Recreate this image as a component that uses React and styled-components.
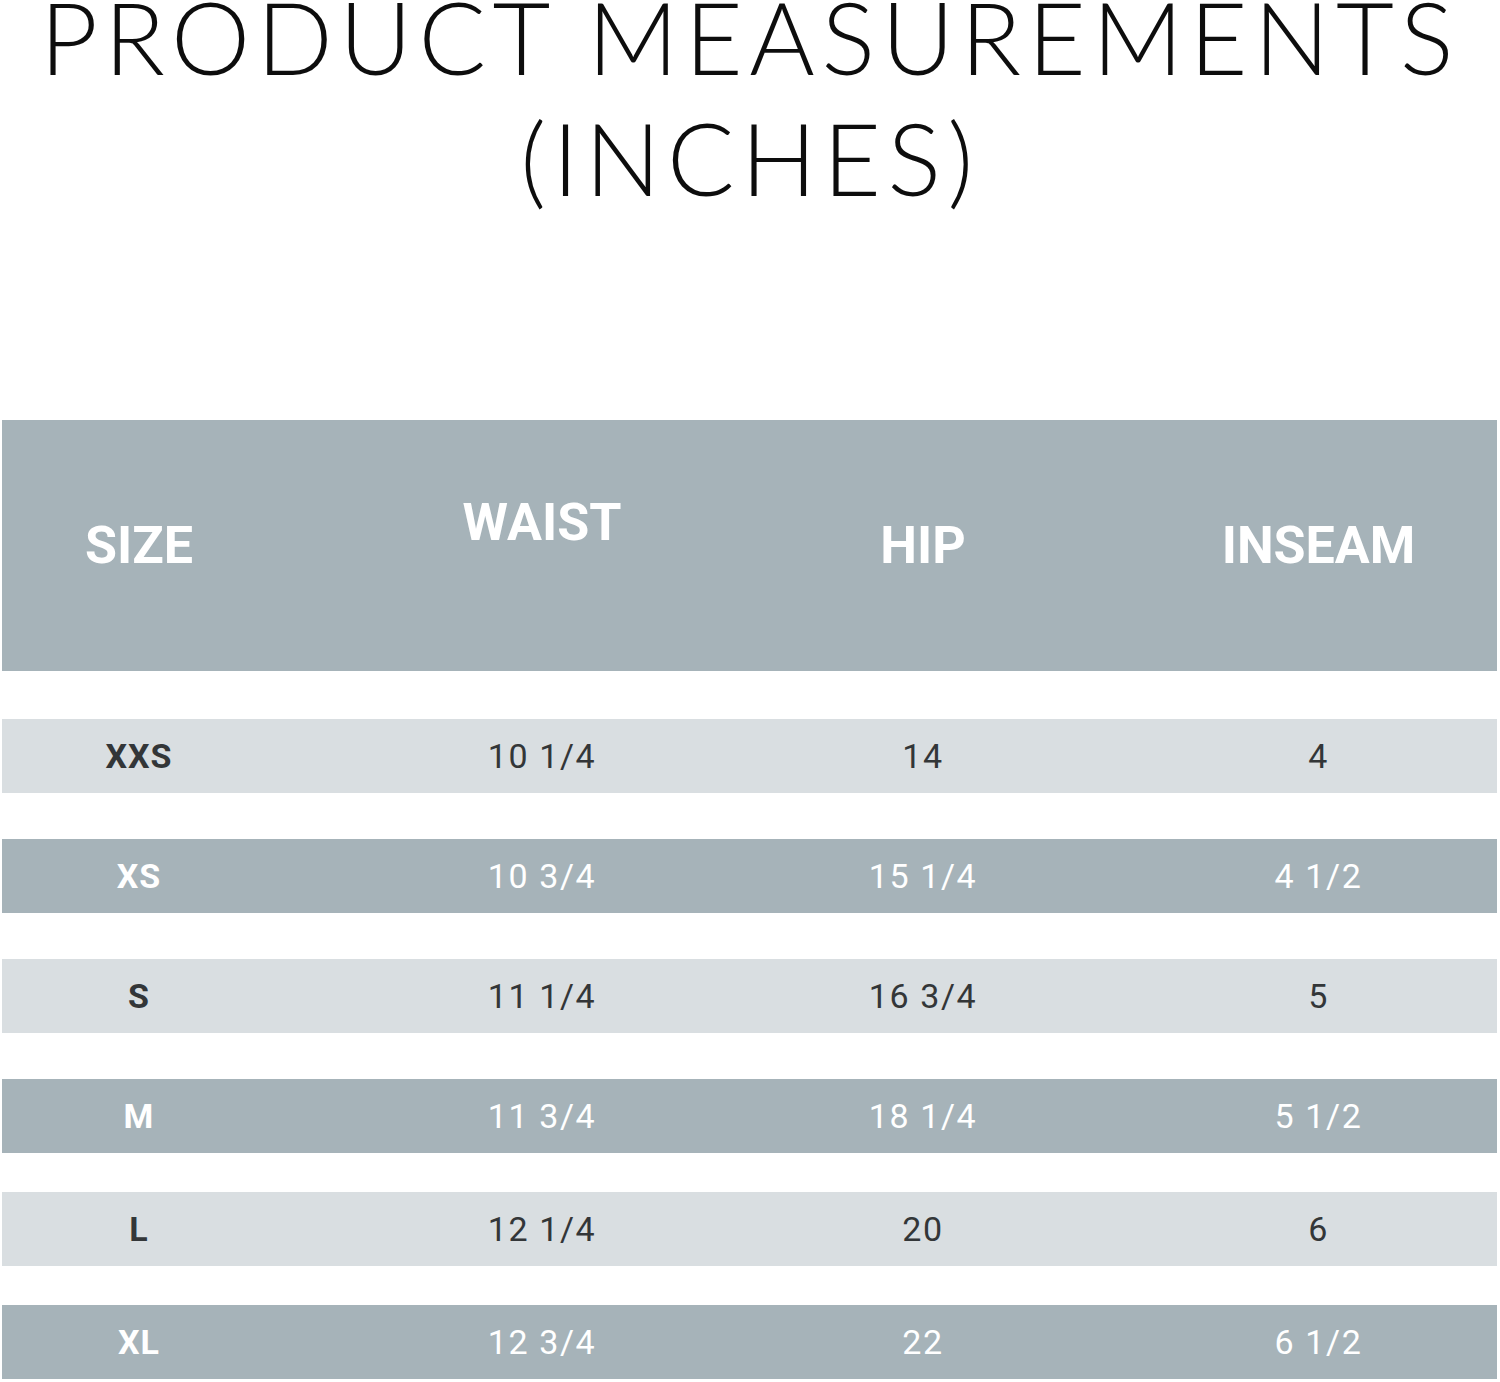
import styled, { createGlobalStyle } from "styled-components";

// ------- STYLES ---------
const GlobalStyle = createGlobalStyle`
body{
  margin: 0;
  background: #ffffff;
  overflow: hidden;
}
`

const Page = styled.div`
width: 1500px;
height: 1382px;
overflow: hidden;
`

const Title = styled.h1`
margin: -24px 0 0;
font-family: Lato, "Open Sans", sans-serif;
font-weight: 300;
font-size: 100px;
line-height: 121px;
letter-spacing: 6.5px;
text-align: center;
color: #0d0d0d;
`

const Table = styled.div`
margin: 202px 3px 0 2px;
display: flex;
flex-direction: column;
`

const Row = styled.div`
display: grid;
grid-template-columns: 274px 532px 230px 1fr;
align-items: center;
justify-items: center;
height: ${(p) => p.$height}px;
margin-top: ${(p) => p.$gap}px;
background-color: ${(p) => (p.$dark ? "#a6b3b9" : "#d9dee1")};
color: ${(p) => (p.$dark ? "#ffffff" : "#333638")};

& > :nth-child(4){
  padding-left: 102px;
}
`

const HeadCell = styled.div`
font-family: Roboto, "Liberation Sans", sans-serif;
font-weight: 700;
font-size: 52px;
letter-spacing: 0;
color: #ffffff;
margin-bottom: ${(p) => (p.$raised ? 46 : 0)}px;
`

const SizeCell = styled.div`
font-family: Roboto, "Liberation Sans", sans-serif;
font-weight: 700;
font-size: 34px;
letter-spacing: 1px;
`

const ValueCell = styled.div`
font-family: Roboto, "Liberation Sans", sans-serif;
font-weight: 400;
font-size: 34px;
letter-spacing: 1.6px;
`

// -------------------------

const rows = [
  { size: "XXS", waist: "10 1/4", hip: "14", inseam: "4", gap: 48 },
  { size: "XS", waist: "10 3/4", hip: "15 1/4", inseam: "4 1/2", gap: 46 },
  { size: "S", waist: "11 1/4", hip: "16 3/4", inseam: "5", gap: 46 },
  { size: "M", waist: "11 3/4", hip: "18 1/4", inseam: "5 1/2", gap: 46 },
  { size: "L", waist: "12 1/4", hip: "20", inseam: "6", gap: 39 },
  { size: "XL", waist: "12 3/4", hip: "22", inseam: "6 1/2", gap: 39 },
]

function App() {
  return (
    <Page>
      <GlobalStyle />
      <Title>
        PRODUCT MEASUREMENTS
        <br />
        (INCHES)
      </Title>
      <Table>
        <Row $dark $height={251} $gap={0}>
          <HeadCell>SIZE</HeadCell>
          <HeadCell $raised>WAIST</HeadCell>
          <HeadCell>HIP</HeadCell>
          <HeadCell>INSEAM</HeadCell>
        </Row>
        {rows.map((r, i) => (
          <Row key={r.size} $dark={i % 2 === 1} $height={74} $gap={r.gap}>
            <SizeCell>{r.size}</SizeCell>
            <ValueCell>{r.waist}</ValueCell>
            <ValueCell>{r.hip}</ValueCell>
            <ValueCell>{r.inseam}</ValueCell>
          </Row>
        ))}
      </Table>
    </Page>
  )
}

export default App;
